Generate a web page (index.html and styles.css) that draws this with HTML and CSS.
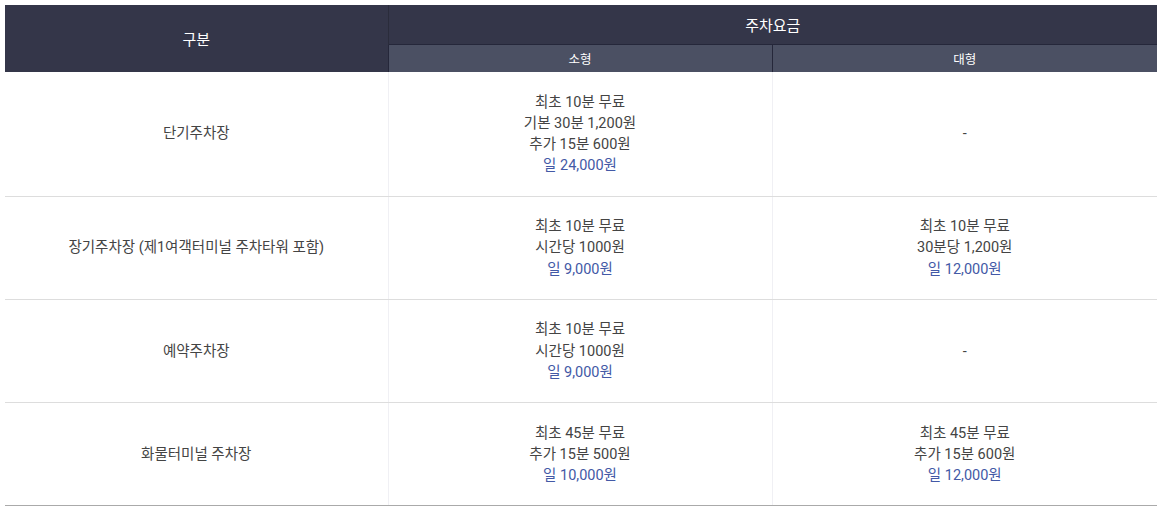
FILE: index.html
```html
<!DOCTYPE html>
<html lang="ko">
<head>
    <meta charset="UTF-8">
    <meta name="viewport" content="width=device-width, initial-scale=1.0">
    <title>주차요금</title>
    <link rel="stylesheet" href="styles.css">
</head>
<body>
    <table class="fee-table">
        <colgroup>
            <col class="col-type">
            <col class="col-small">
            <col class="col-large">
        </colgroup>
        <thead>
            <tr class="head-main">
                <th rowspan="2">구분</th>
                <th colspan="2">주차요금</th>
            </tr>
            <tr class="head-sub">
                <th>소형</th>
                <th>대형</th>
            </tr>
        </thead>
        <tbody>
            <tr>
                <td>단기주차장</td>
                <td>최초 10분 무료<br>기본 30분 1,200원<br>추가 15분 600원<br><span class="day">일 24,000원</span></td>
                <td>-</td>
            </tr>
            <tr>
                <td>장기주차장 (제1여객터미널 주차타워 포함)</td>
                <td>최초 10분 무료<br>시간당 1000원<br><span class="day">일 9,000원</span></td>
                <td>최초 10분 무료<br>30분당 1,200원<br><span class="day">일 12,000원</span></td>
            </tr>
            <tr>
                <td>예약주차장</td>
                <td>최초 10분 무료<br>시간당 1000원<br><span class="day">일 9,000원</span></td>
                <td>-</td>
            </tr>
            <tr class="last">
                <td>화물터미널 주차장</td>
                <td>최초 45분 무료<br>추가 15분 500원<br><span class="day">일 10,000원</span></td>
                <td>최초 45분 무료<br>추가 15분 600원<br><span class="day">일 12,000원</span></td>
            </tr>
        </tbody>
    </table>
</body>
</html>
```

FILE: styles.css
```css
body {
    margin: 5px;
    background: #fff;
    font-family: Roboto, "Noto Sans CJK KR", sans-serif;
}

.fee-table {
    width: 1152px;
    border-collapse: collapse;
    table-layout: fixed;
    text-align: center;
    font-size: 14.5px;
    color: #444;
}

.col-type {
    width: 383px;
}

.col-small {
    width: 384px;
}

.fee-table th {
    color: #fff;
    font-weight: normal;
    padding: 0;
}

.head-main th {
    background: #343649;
    height: 39px;
    font-size: 15px;
    border-left: 1px solid #2a2c3b;
}

.head-main th:first-child {
    border-left: none;
}

.head-sub th {
    background: #4b5063;
    height: 27px;
    font-size: 12.5px;
    border-top: 1px solid #25273a;
    border-left: 1px solid #25273a;
}

.fee-table td {
    padding: 19.5px 0 19px;
    line-height: 21.25px;
    border-bottom: 1px solid #ddd;
    border-left: 1px solid #f0f0f4;
}

.fee-table td:first-child {
    border-left: none;
}

.fee-table tr.last td {
    border-bottom-color: #aaa;
}

.day {
    color: #4359a6;
}
```
